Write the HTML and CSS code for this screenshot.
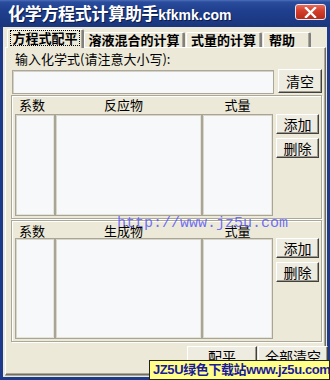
FILE: index.html
```html
<!DOCTYPE html>
<html>
<head>
<meta charset="utf-8">
<link rel="stylesheet" href="styles.css">
</head>
<body>
<div class="titlebar">
  <span class="title">化学方程式计算助手<span class="site">kfkmk.com</span></span>
  <span class="close"><svg width="13" height="11" viewBox="0 0 13 11"><path d="M2 1 L11 10 M11 1 L2 10" stroke="#fff" stroke-width="2.4" stroke-linecap="square"/></svg></span>
</div>
<div class="frame">
  <div class="tabs">
    <div class="tab active t1"><span class="focus">方程式配平</span></div>
    <div class="tab t2">溶液混合的计算</div>
    <div class="tab t3">式量的计算</div>
    <div class="tab t4">帮助</div>
  </div>
  <div class="panel">
    <div class="prompt">输入化学式(请注意大小写):</div>
    <div class="input-row">
      <div class="input"></div>
      <button class="btn btn-clear">清空</button>
    </div>
    <div class="group g1">
      <div class="col c1"><div class="head">系数</div><div class="list"></div></div>
      <div class="col c2"><div class="head">反应物</div><div class="list"></div></div>
      <div class="col c3"><div class="head">式量</div><div class="list"></div></div>
      <div class="side">
        <button class="btn btn-side">添加</button>
        <button class="btn btn-side">删除</button>
      </div>
    </div>
    <div class="group g2">
      <div class="col c1"><div class="head">系数</div><div class="list"></div></div>
      <div class="col c2"><div class="head">生成物</div><div class="list"></div></div>
      <div class="col c3"><div class="head">式量</div><div class="list"></div></div>
      <div class="side">
        <button class="btn btn-side">添加</button>
        <button class="btn btn-side">删除</button>
      </div>
    </div>
    <div class="actions">
      <button class="btn btn-act">配平</button>
      <button class="btn btn-act">全部清空</button>
    </div>
  </div>
</div>
<div class="watermark">http://www.jz5u.com</div>
<div class="banner">JZ5U绿色下载站www.jz5u.com</div>
</body>
</html>
```
FILE: styles.css
```css
* { box-sizing: border-box; }
html, body { margin: 0; padding: 0; }
body {
  width: 330px;
  height: 380px;
  overflow: hidden;
  position: relative;
  background: #ECE9D8;
  font-family: "Noto Sans CJK SC", "Noto Sans", sans-serif;
  font-size: 13px;
  color: #000;
}
.titlebar {
  height: 27px;
  display: flex;
  justify-content: space-between;
  align-items: flex-start;
  background: linear-gradient(to bottom, #4d6fb8 0, #2a4c9c 2px, #1f3f8e 40%, #1a367c 100%);
  padding: 0 4px 0 8px;
}
.title {
  color: #fff;
  font-weight: bold;
  font-size: 17px;
  line-height: 17px;
  margin-top: 4px;
  letter-spacing: -0.3px;
  text-shadow: 1px 1px 0 #0c1c48;
}
.site {
  font-family: "Liberation Sans", Arial, sans-serif;
  font-size: 14px;
  letter-spacing: 0;
}
.close {
  margin-top: 4px;
  width: 31px;
  height: 16px;
  border: 1px solid #e8e8f0;
  border-radius: 3px;
  background: linear-gradient(to bottom, #e86a5a 0, #d4402d 40%, #b82a19 100%);
  display: flex;
  align-items: center;
  justify-content: center;
}
.close svg { display: block; }
.frame {
  height: 353px;
  border: 3px solid #1d3b8a;
  border-top: none;
  display: flex;
  flex-direction: column;
}
.tabs {
  height: 20px;
  display: flex;
  align-items: flex-end;
  padding-left: 4px;
  position: relative;
  z-index: 2;
}
.tab {
  height: 15px;
  border-top: 1px solid #fff;
  border-left: 1px solid #fff;
  border-right: 2px solid;
  border-right-color: #808080;
  box-shadow: inset -1px 0 0 #ACA899;
  font-weight: bold;
  font-size: 13px;
  line-height: 14px;
  text-align: center;
  white-space: nowrap;
  background: #ECE9D8;
  border-radius: 2px 2px 0 0;
}
.tab.active {
  height: 19px;
  margin-bottom: -1px;
  padding-top: 1px;
}
.focus {
  display: inline-block;
  outline: 1px dotted #000;
  padding: 0 1px;
  line-height: 14px;
}
.t1 { width: 77px; }
.t2 { width: 101px; }
.t3 { width: 76px; margin-left: 1px; }
.t4 { width: 48px; margin-left: 1px; text-align: left; padding-left: 5px; }
.panel {
  width: 321px;
  margin-left: 2px;
  height: 328px;
  border: 1px solid;
  border-color: #fff #716F64 #716F64 #fff;
  box-shadow: inset -1px -1px 0 #ACA899, 0 1px 0 #ACA899;
  padding: 3px 0 0 5px;
}
.prompt {
  height: 16px;
  line-height: 16px;
  padding-left: 4px;
}
.input-row {
  display: flex;
  margin-top: 2px;
  padding-left: 1px;
  height: 24px;
}
.input {
  width: 262px;
  height: 24px;
  margin-top: 1px;
  background: #F7F8FA;
  border: 1px solid #ACA899;
  box-shadow: inset 1px 1px 0 #D4D0C8;
}
.btn {
  font-family: "Noto Sans CJK SC", "Noto Sans", sans-serif;
  font-size: 14px;
  color: #000;
  background: #EEEBE0;
  border: 1px solid;
  border-color: #fff #404040 #404040 #fff;
  box-shadow: inset -1px -1px 0 #9D9A8C;
  padding: 0;
  margin: 0;
  line-height: 16px;
}
.btn-clear {
  width: 44px;
  height: 24px;
  margin-left: 4px;
}
.group {
  width: 311px;
  display: flex;
  border: 1px solid #ACA899;
  box-shadow: inset 1px 1px 0 #fff, 1px 1px 0 #fff;
  padding: 0 1px 2px 3px;
}
.g1 { height: 124px; margin-top: 2px; }
.g2 { height: 122px; margin-top: 1px; }
.col {
  display: flex;
  flex-direction: column;
}
.head {
  height: 18px;
  line-height: 17px;
  text-align: center;
}
.g2 .head { height: 17px; line-height: 17px; padding-top: 1px; }
.c1 .head { text-align: left; padding-left: 4px; }
.c2 .head { padding-right: 10px; }
.list {
  flex: 1;
  background: #F7F8FA;
  border: 1px solid #A9A596;
  box-shadow: inset 1px 1px 0 #D8D5C9, inset -1px -1px 0 #E6E4DA;
}
.c1 { width: 40px; }
.c2 { width: 147px; }
.c3 { width: 71px; }
.side {
  margin-left: 3px;
  width: 43px;
  padding-top: 18px;
  display: flex;
  flex-direction: column;
  gap: 4px;
}
.g2 .side { padding-top: 17px; }
.btn-side {
  width: 43px;
  height: 20px;
}
.actions {
  display: flex;
  justify-content: flex-end;
  gap: 1px;
  margin-top: 4px;
  padding-right: 2px;
  width: 319px;
}
.btn-act {
  width: 70px;
  height: 24px;
  padding-bottom: 5px;
}
.watermark {
  position: absolute;
  left: 117px;
  top: 215px;
  font-family: "Liberation Mono", "Courier New", monospace;
  font-size: 15px;
  line-height: 18px;
  color: rgba(80, 80, 250, 0.8);
  white-space: nowrap;
}
.banner {
  position: absolute;
  left: 149px;
  top: 360px;
  width: 181px;
  height: 20px;
  background: #FFFF88;
  border: 1px solid #222;
  color: #1a1a9a;
  font-family: "Liberation Sans", "Noto Sans CJK SC", sans-serif;
  font-weight: bold;
  font-size: 13px;
  line-height: 18px;
  padding-left: 3px;
  white-space: nowrap;
  letter-spacing: -0.4px;
  overflow: hidden;
}
```
